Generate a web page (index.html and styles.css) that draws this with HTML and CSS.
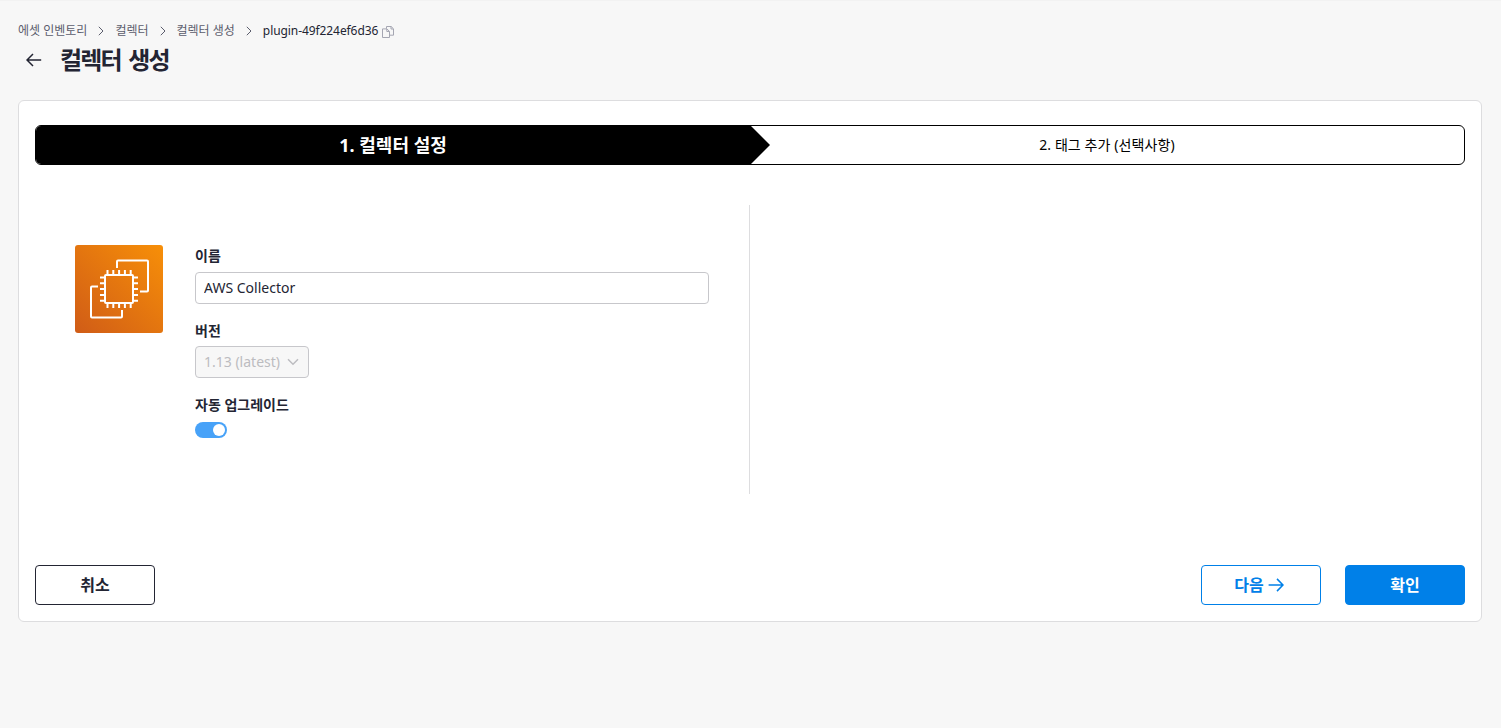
FILE: index.html
```html
<!DOCTYPE html>
<html lang="ko">
<head>
<meta charset="utf-8">
<title>컬렉터 생성</title>
<link rel="stylesheet" href="styles.css">
</head>
<body>
<main class="page">
  <nav class="breadcrumb">
    <a class="crumb">에셋 인벤토리</a>
    <svg class="sep" viewBox="0 0 6 10"><path d="M.8.8 5 5 .8 9.200"/></svg>
    <a class="crumb">컬렉터</a>
    <svg class="sep" viewBox="0 0 6 10"><path d="M.8.8 5 5 .8 9.200"/></svg>
    <a class="crumb">컬렉터 생성</a>
    <svg class="sep" viewBox="0 0 6 10"><path d="M.8.8 5 5 .8 9.200"/></svg>
    <span class="crumb current">plugin-49f224ef6d36</span>
    <svg class="copy" viewBox="0 0 12 12"><path d="M4.500 2.700V.5h4.700l2.300 2.300v6.400H7.700M9 .7V3h2.300M.5 2.900h4.400l2.600 2.500v6.100h-7zM4.800 3v2.500h2.500"/></svg>
  </nav>
  <header class="heading">
    <svg class="back" viewBox="0 0 16 14"><path d="M15.200 7H1M7 1 1 7l6 6"/></svg>
    <h1>컬렉터 생성</h1>
  </header>

  <section class="card">
    <ol class="steps">
      <li class="step active">1. 컬렉터 설정</li>
      <li class="step">2. 태그 추가 (선택사항)</li>
    </ol>

    <div class="content">
      <div class="settings">
        <svg class="logo" viewBox="0 0 88 88">
          <defs>
            <linearGradient id="orange" x1="0" y1="1" x2="1" y2="0">
              <stop offset="0" stop-color="#d05c17"/>
              <stop offset="1" stop-color="#f78f08"/>
            </linearGradient>
          </defs>
          <rect width="88" height="88" rx="3" fill="url(#orange)"/>
          <g class="chip">
            <rect x="30" y="30" width="28" height="28" rx="1"/>
            <path d="M32.500 25v5M38.300 25v5M44.100 25v5M49.900 25v5M55.700 25v5M32.500 58v5M38.300 58v5M44.100 58v5M49.900 58v5M55.700 58v5M25 32.500h5M25 38.300h5M25 44.100h5M25 49.900h5M25 55.700h5M58 32.500h5M58 38.300h5M58 44.100h5M58 49.900h5M58 55.700h5"/>
            <path d="M42 23v-6.500q0-1 1-1h29q1 0 1 1V45.500q0 1-1 1h-7M23 41.500h-6q-1 0-1 1V71.500q0 1 1 1h29q1 0 1-1V65"/>
          </g>
        </svg>
        <form class="fields">
          <label class="field">
            <span class="label">이름</span>
            <input class="input" type="text" value="AWS Collector">
          </label>
          <div class="field">
            <span class="label">버전</span>
            <div class="select">
              <span>1.13 (latest)</span>
              <svg class="chevron" viewBox="0 0 12 8"><path d="m1 1.200 5 5 5-5"/></svg>
            </div>
          </div>
          <div class="field">
            <span class="label">자동 업그레이드</span>
            <div class="toggle"><span class="knob"></span></div>
          </div>
        </form>
      </div>
      <div class="options"></div>
    </div>

    <footer class="actions">
      <button class="btn" type="button">취소</button>
      <div class="group">
        <button class="btn outline" type="button">다음
          <svg class="next" viewBox="0 0 16 14"><path d="M.6 7H15M9 .9 15 7l-6 6.100"/></svg>
        </button>
        <button class="btn primary" type="button">확인</button>
      </div>
    </footer>
  </section>
</main>
</body>
</html>
```
FILE: styles.css
```css
* {
  box-sizing: border-box;
}

body {
  margin: 0;
  min-height: 728px;
  background: #f7f7f7;
  border-top: 1px solid #f2f2f2;
  color: #232533;
  font-family: "Noto Sans", "Noto Sans CJK KR", sans-serif;
}

svg {
  flex: none;
  fill: none;
  stroke: currentColor;
}

.page {
  padding: 21px 19px 0 18px;
}

.breadcrumb {
  display: flex;
  align-items: center;
  height: 18px;
  font-size: 12px;
  line-height: 18px;
  color: #5b5d6d;
}

.sep {
  width: 6px;
  height: 10px;
  margin: 0 11px 1px;
  stroke-width: 1;
}

.current {
  color: #232533;
  letter-spacing: -0.08px;
}

.copy {
  width: 12px;
  height: 12px;
  margin: 2px 0 0 4px;
  color: #a5a6b2;
}

.heading {
  display: flex;
  align-items: center;
  height: 40px;
  padding-left: 8px;
  gap: 18px;
}

.back {
  width: 16px;
  height: 14px;
  stroke-width: 1.5;
}

h1 {
  margin: 0;
  font-size: 24px;
  line-height: 36px;
  font-weight: 700;
  letter-spacing: -1.8px;
  word-spacing: 3px;
}

.card {
  height: 522px;
  margin-top: 20px;
  padding: 24px 16px 16px;
  background: #fff;
  border: 1px solid #dddddf;
  border-radius: 6px;
  display: flex;
  flex-direction: column;
}

.steps {
  display: flex;
  flex: none;
  height: 40px;
  margin: 0;
  padding: 0;
  list-style: none;
  color: #000;
  border: 1px solid #000;
  border-radius: 6px;
  overflow: hidden;
}

.step {
  flex: 1;
  display: flex;
  align-items: center;
  justify-content: center;
  padding: 0 20px 2px 0;
  font-size: 14px;
  letter-spacing: 0.1px;
}

.active {
  flex: 0 0 734px;
  background: #000;
  color: #fff;
  font-size: 18px;
  font-weight: 700;
  letter-spacing: 0;
  clip-path: polygon(0 0, 715px 0, 734px 50%, 715px 100%, 0 100%);
}

.content {
  display: flex;
  height: 289px;
  margin-top: 40px;
}

.settings {
  display: flex;
  gap: 32px;
  width: 715px;
  padding: 40px 40px 0;
  border-right: 1px solid #dddddf;
}

.options {
  flex: 1;
}

.logo {
  width: 88px;
  height: 88px;
  stroke: none;
}

.chip {
  stroke: #fff;
  stroke-width: 2;
}

.fields {
  flex: 1;
}

.field {
  display: block;
  margin-bottom: 16px;
}

.label {
  display: block;
  height: 26.500px;
  font-size: 14px;
  line-height: 22px;
  font-weight: 700;
}

.input {
  display: block;
  width: 100%;
  height: 32px;
  padding: 0 8px 1px;
  background: #fff;
  border: 1px solid #c7c7cb;
  border-radius: 4px;
  color: #232533;
  font: 14px "Noto Sans", "Noto Sans CJK KR", sans-serif;
}

.select {
  display: flex;
  align-items: center;
  justify-content: space-between;
  width: 114px;
  height: 32px;
  padding: 0 9px 1px 8px;
  background: #f7f7f7;
  border: 1px solid #c7c7cb;
  border-radius: 4px;
  color: #bcbcc0;
  font-size: 14px;
}

.chevron {
  width: 12px;
  height: 8px;
  stroke-width: 1.5;
}

.toggle {
  display: flex;
  align-items: center;
  justify-content: flex-end;
  width: 32px;
  height: 16px;
  margin-top: 1px;
  padding: 2px;
  border-radius: 8px;
  background: #47a2f8;
}

.knob {
  width: 12px;
  height: 12px;
  border-radius: 50%;
  background: #fff;
}

.actions {
  display: flex;
  justify-content: space-between;
  margin-top: auto;
}

.group {
  display: flex;
  gap: 24px;
}

.btn {
  display: flex;
  align-items: center;
  justify-content: center;
  gap: 4px;
  width: 120px;
  height: 40px;
  padding: 0 0 2px;
  background: #fff;
  border: 1px solid #232533;
  border-radius: 4px;
  color: #232533;
  font: 700 16px "Noto Sans", "Noto Sans CJK KR", sans-serif;
}

.outline {
  padding-right: 4px;
  border-color: #0080e8;
  color: #0080e8;
}

.primary {
  background: #0080e8;
  border-color: #0080e8;
  color: #fff;
}

.next {
  width: 16px;
  height: 14px;
  margin-top: 2px;
  stroke-width: 1.5;
}
```
